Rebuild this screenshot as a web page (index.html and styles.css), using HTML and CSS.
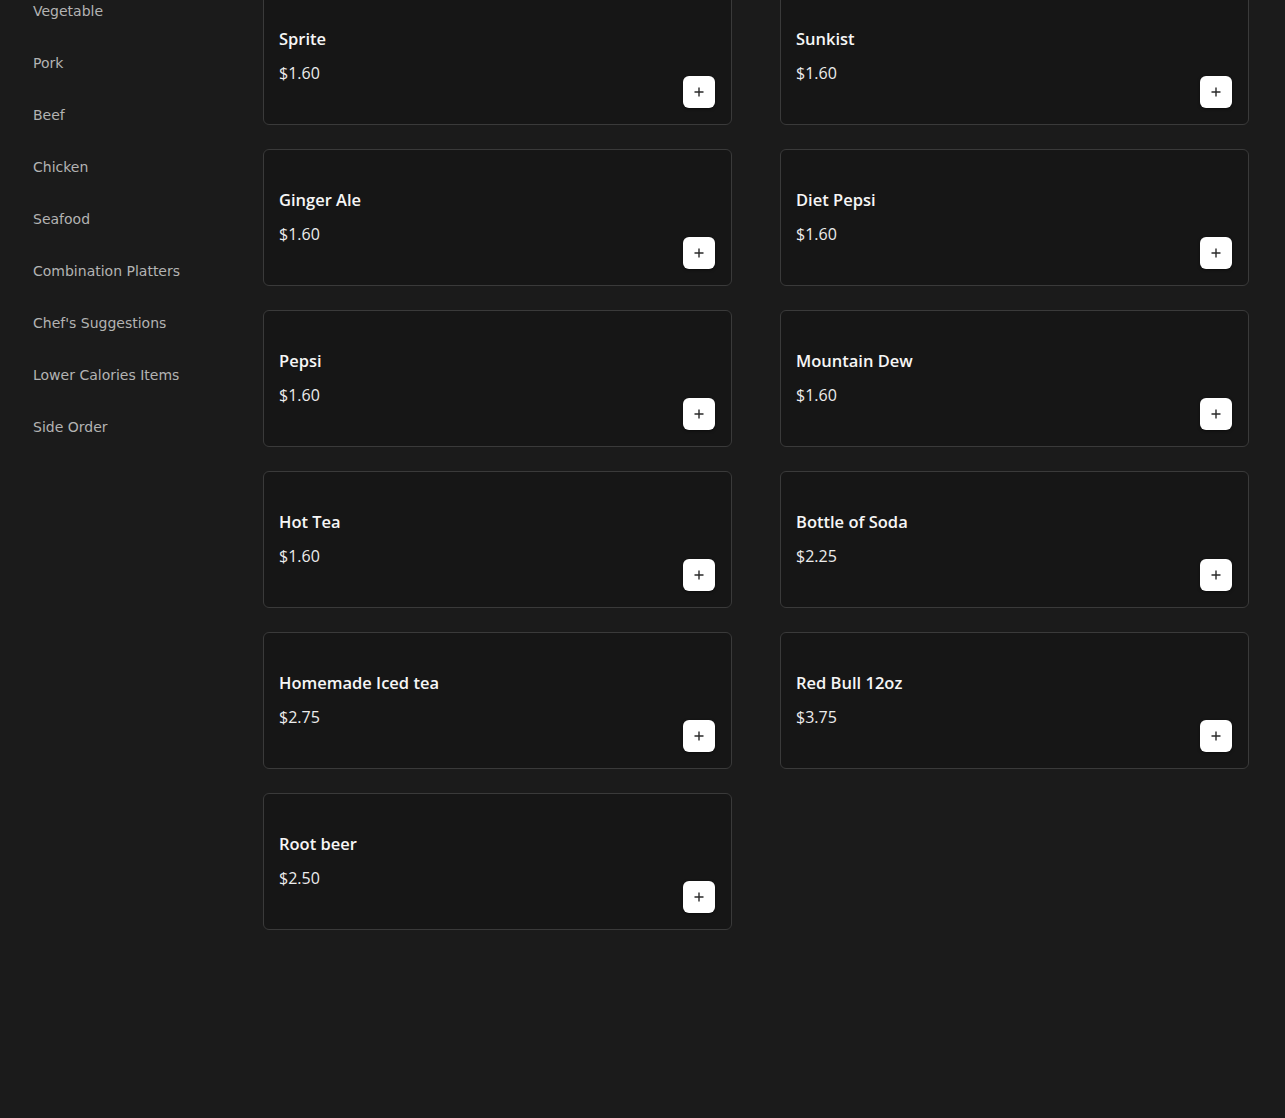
FILE: index.html
```html
<!DOCTYPE html>
<html lang="en">
<head>
<meta charset="utf-8">
<title>Menu</title>
<link rel="stylesheet" href="styles.css">
</head>
<body>
<div class="page">
  <nav class="sidebar">
    <a class="cat">Vegetable</a>
    <a class="cat">Pork</a>
    <a class="cat">Beef</a>
    <a class="cat">Chicken</a>
    <a class="cat">Seafood</a>
    <a class="cat">Combination Platters</a>
    <a class="cat">Chef's Suggestions</a>
    <a class="cat">Lower Calories Items</a>
    <a class="cat">Side Order</a>
  </nav>
  <main class="grid">
    <div class="card"><div class="info"><div class="name">Sprite</div><div class="price">$1.60</div></div><button class="add"><svg viewBox="0 0 10 10" width="10" height="10"><path d="M5 0.5V9.5M0.5 5H9.5" stroke="#2a2a2a" stroke-width="1.4"/></svg></button></div>
    <div class="card"><div class="info"><div class="name">Sunkist</div><div class="price">$1.60</div></div><button class="add"><svg viewBox="0 0 10 10" width="10" height="10"><path d="M5 0.5V9.5M0.5 5H9.5" stroke="#2a2a2a" stroke-width="1.4"/></svg></button></div>
    <div class="card"><div class="info"><div class="name">Ginger Ale</div><div class="price">$1.60</div></div><button class="add"><svg viewBox="0 0 10 10" width="10" height="10"><path d="M5 0.5V9.5M0.5 5H9.5" stroke="#2a2a2a" stroke-width="1.4"/></svg></button></div>
    <div class="card"><div class="info"><div class="name">Diet Pepsi</div><div class="price">$1.60</div></div><button class="add"><svg viewBox="0 0 10 10" width="10" height="10"><path d="M5 0.5V9.5M0.5 5H9.5" stroke="#2a2a2a" stroke-width="1.4"/></svg></button></div>
    <div class="card"><div class="info"><div class="name">Pepsi</div><div class="price">$1.60</div></div><button class="add"><svg viewBox="0 0 10 10" width="10" height="10"><path d="M5 0.5V9.5M0.5 5H9.5" stroke="#2a2a2a" stroke-width="1.4"/></svg></button></div>
    <div class="card"><div class="info"><div class="name">Mountain Dew</div><div class="price">$1.60</div></div><button class="add"><svg viewBox="0 0 10 10" width="10" height="10"><path d="M5 0.5V9.5M0.5 5H9.5" stroke="#2a2a2a" stroke-width="1.4"/></svg></button></div>
    <div class="card"><div class="info"><div class="name">Hot Tea</div><div class="price">$1.60</div></div><button class="add"><svg viewBox="0 0 10 10" width="10" height="10"><path d="M5 0.5V9.5M0.5 5H9.5" stroke="#2a2a2a" stroke-width="1.4"/></svg></button></div>
    <div class="card"><div class="info"><div class="name">Bottle of Soda</div><div class="price">$2.25</div></div><button class="add"><svg viewBox="0 0 10 10" width="10" height="10"><path d="M5 0.5V9.5M0.5 5H9.5" stroke="#2a2a2a" stroke-width="1.4"/></svg></button></div>
    <div class="card"><div class="info"><div class="name">Homemade Iced tea</div><div class="price">$2.75</div></div><button class="add"><svg viewBox="0 0 10 10" width="10" height="10"><path d="M5 0.5V9.5M0.5 5H9.5" stroke="#2a2a2a" stroke-width="1.4"/></svg></button></div>
    <div class="card"><div class="info"><div class="name">Red Bull 12oz</div><div class="price">$3.75</div></div><button class="add"><svg viewBox="0 0 10 10" width="10" height="10"><path d="M5 0.5V9.5M0.5 5H9.5" stroke="#2a2a2a" stroke-width="1.4"/></svg></button></div>
    <div class="card"><div class="info"><div class="name">Root beer</div><div class="price">$2.50</div></div><button class="add"><svg viewBox="0 0 10 10" width="10" height="10"><path d="M5 0.5V9.5M0.5 5H9.5" stroke="#2a2a2a" stroke-width="1.4"/></svg></button></div>
  </main>
</div>
</body>
</html>
```

FILE: styles.css
```css
html, body {
  margin: 0;
  padding: 0;
  background: #1b1b1b;
  height: 100%;
  overflow: hidden;
}

.page {
  display: flex;
  align-items: flex-start;
  min-height: 1118px;
}

.sidebar {
  width: 230px;
  padding-left: 33px;
  margin-top: -15px;
  display: flex;
  flex-direction: column;
  flex-shrink: 0;
}

.cat {
  display: block;
  padding: 16px 0;
  font-family: "DejaVu Sans", sans-serif;
  font-size: 14px;
  line-height: 20px;
  color: #b3b3b3;
}

.grid {
  flex: 1;
  margin-top: -12px;
  margin-right: 36px;
  display: grid;
  grid-template-columns: 1fr 1fr;
  column-gap: 48px;
  row-gap: 24px;
}

.card {
  box-sizing: border-box;
  height: 137px;
  background: #161616;
  border: 1px solid #3a3a3a;
  border-radius: 6px;
  padding: 16px;
  display: flex;
  justify-content: space-between;
  align-items: flex-end;
}

.info {
  align-self: flex-start;
  margin-top: 22px;
  margin-left: -1px;
  font-family: "Open Sans", sans-serif;
  color: #f6f6f6;
}

.name {
  font-size: 16.5px;
  font-weight: 600;
  line-height: 24px;
}

.price {
  margin-top: 10px;
  font-size: 16px;
  font-weight: 400;
  line-height: 24px;
  color: #ececec;
}

.add {
  width: 32px;
  height: 32px;
  padding: 0;
  border: none;
  border-radius: 6px;
  background: #ffffff;
  display: flex;
  align-items: center;
  justify-content: center;
  box-shadow: 0 1px 3px rgba(0, 0, 0, 0.5);
}
```
